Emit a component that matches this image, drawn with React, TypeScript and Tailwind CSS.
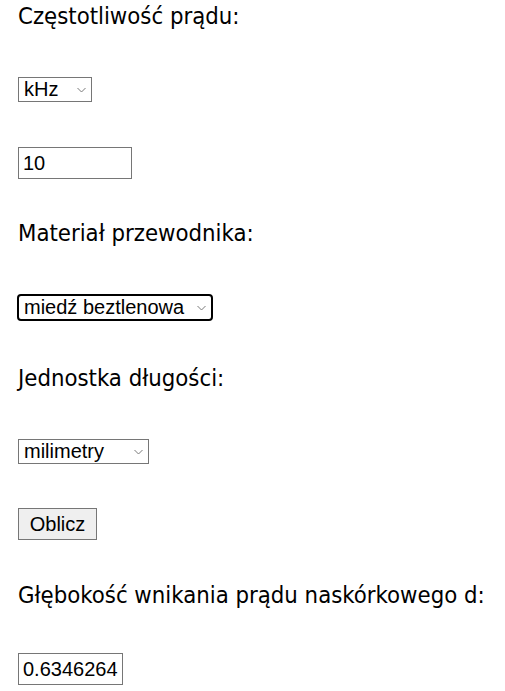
import { useState } from "react";

const labelFont =
  "font-['DejaVu_Sans_Condensed','DejaVu_Sans',sans-serif] font-stretch-condensed text-[23.7px] leading-[29px] text-black";
const ctrlFont = "font-['Liberation_Sans',Arial,sans-serif] text-[20px] leading-[23px] text-black";

function Chevron() {
  return (
    <svg
      width="9"
      height="5"
      viewBox="0 0 9 5"
      className="pointer-events-none absolute right-[5px] top-1/2 -translate-y-1/2"
    >
      <polyline points="0.5,0.5 4.5,4.5 8.5,0.5" fill="none" stroke="#7a7a7a" strokeWidth="1" />
    </svg>
  );
}

function Select({
  options,
  value,
  width,
  focused,
}: {
  options: string[];
  value: string;
  width: string;
  focused?: boolean;
}) {
  const [v, setV] = useState(value);
  return (
    <div
      className={
        focused
          ? "relative -ml-px h-[27px] w-[196px] rounded-[4px] border-2 border-black bg-white"
          : `relative h-[25px] ${width} border border-[#767676] bg-white`
      }
    >
      <select
        value={v}
        onChange={(e) => setV(e.target.value)}
        className={`h-full w-full appearance-none bg-transparent pl-[5px] pr-5 outline-none ${ctrlFont}`}
      >
        {options.map((o) => (
          <option key={o}>{o}</option>
        ))}
      </select>
      <Chevron />
    </div>
  );
}

export default function App() {
  const [freq, setFreq] = useState("10");

  return (
    <main className="flex min-h-screen flex-col items-start bg-white pl-[18px] pt-[2px]">
      <p className={labelFont}>Częstotliwość prądu:</p>

      <div className="mt-[46px]">
        <Select options={["Hz", "kHz", "MHz"]} value="kHz" width="w-[74px]" />
      </div>

      <input
        value={freq}
        onChange={(e) => setFreq(e.target.value)}
        className={`mt-[45px] h-[32px] w-[114px] border border-[#767676] px-[4px] outline-none ${ctrlFont}`}
      />

      <p className={`mt-[40px] ${labelFont}`}>Materiał przewodnika:</p>

      <div className="mt-[46px]">
        <Select
          options={["miedź beztlenowa", "miedź", "aluminium", "srebro"]}
          value="miedź beztlenowa"
          width="w-[194px]"
          focused
        />
      </div>

      <p className={`mt-[43px] ${labelFont}`}>Jednostka długości:</p>

      <div className="mt-[46px]">
        <Select options={["milimetry", "mikrometry", "metry"]} value="milimetry" width="w-[131px]" />
      </div>

      <button
        type="button"
        className={`mt-[44px] h-[32px] w-[79px] border border-[#767676] bg-[#efefef] ${ctrlFont}`}
      >
        Oblicz
      </button>

      <p className={`mt-[41px] ${labelFont}`}>Głębokość wnikania prądu naskórkowego d:</p>

      <input
        readOnly
        value="0.6346264"
        className={`mt-[43px] h-[32px] w-[105px] border border-[#767676] px-[4px] outline-none ${ctrlFont}`}
      />
    </main>
  );
}
